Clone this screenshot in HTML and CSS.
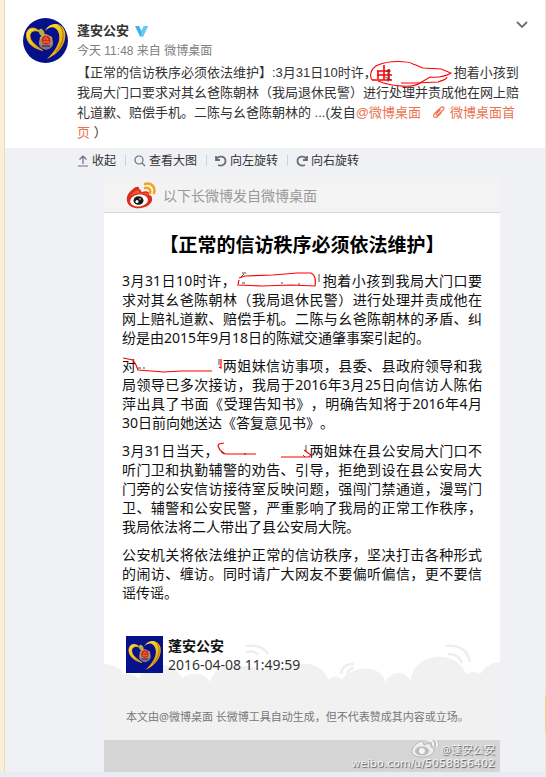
FILE: index.html
```html
<!DOCTYPE html>
<html lang="zh-CN">
<head>
<meta charset="utf-8">
<title>蓬安公安的微博</title>
<link rel="stylesheet" href="styles.css">
</head>
<body>
<svg class="defs" aria-hidden="true">
  <defs>
    <linearGradient id="gold" x1="0" y1="0" x2="1" y2="1">
      <stop offset="0" stop-color="#ffe338"/><stop offset=".55" stop-color="#f3bd16"/><stop offset="1" stop-color="#b97a08"/>
    </linearGradient>
    <linearGradient id="steel" x1="0" y1="0" x2="0" y2="1">
      <stop offset="0" stop-color="#d8b070"/><stop offset="1" stop-color="#7d6a6a"/>
    </linearGradient>
    <symbol id="emblem" viewBox="0 0 45 45">
      <path d="M17 14C11 7 3 10 3.500 18C4 25 10 30 19.500 32.500C14 28 7 24 7 18C7 13 12 11.500 17 14Z" fill="url(#gold)" stroke="#f0bd1c" stroke-width=".8"/>
      <path d="M16 15C15 10 18 10 20 12C22 14 22 17 21 19C19 19 17 17 16 15Z" fill="#b5b03a"/>
      <path d="M22 13C26 4 39 3 42 14C44 25 36 36 24 41C31 34 38 25 36 16C34 8 27 7 22 13Z" fill="url(#gold)"/>
      <path d="M36 7C42 12 42 24 33 34" fill="none" stroke="#8a6412" stroke-width=".8"/>
      <path d="M23 16L29 19L30 25C30 29 27 31 23 32C19 31 16 29 16 25L17 19Z" fill="url(#steel)"/>
      <circle cx="23" cy="22" r="4.600" fill="#cf2a1e"/>
      <path d="M21 22L23 19.500L25 22M20 24H26" fill="none" stroke="#f0a53a" stroke-width=".8"/>
      <path d="M19 28H27" stroke="#343b87" stroke-width="1.500"/>
    </symbol>
  </defs>
</svg>
<div class="page">
<article class="card">
  <header class="post">
    <svg class="avatar" role="img" aria-label="蓬安公安"><use href="#emblem"/></svg>
    <div class="post-main">
      <div class="author">
        <a class="name" href="#">蓬安公安</a>
        <svg class="verified" viewBox="0 0 13 12" aria-hidden="true"><path d="M0 1H4L6.500 6L9 1H13L8 11.500H5Z" fill="#3db3ee"/><path d="M9 1H13L8 11.500H6L6.500 6Z" fill="#68caf8"/></svg>
        <button class="more" aria-label="更多"><svg viewBox="0 0 12 8"><path d="M1 1L6 6L11 1" fill="none" stroke="#696e78" stroke-width="1.800"/></svg></button>
      </div>
      <p class="meta">今天 11:48 来自 <a href="#">微博桌面</a></p>
      <p class="text">【正常的信访秩序必须依法维护】:3月31日10时许，<span class="redact redact-post"><svg viewBox="0 0 84 28" aria-hidden="true"><g fill="none" stroke="#f00" stroke-width="1.100"><path d="M3 20C0 15 2 8 9 5C20 0 39 1 44 4C48 5 51 7 54 8L72 9L82 13C77 16 71 18 61 17L51 23C45 28 24 27 9 21"/><path d="M32 23H47L69 22C75 20 78 19 78 17"/><path d="M3 20H23M9 11V19M15 5V20M20 9V20M8 11H21M8 15H23" stroke-width="1.600"/></g><path d="M17 11H22M19 9V22M16 17L22 20" stroke="#443438" stroke-width=".8"/></svg></span>抱着小孩到<br>我局大门口要求对其幺爸陈朝林（我局退休民警）进行处理并责成他在网上赔<br>礼道歉、赔偿手机。二陈与幺爸陈朝林的 ...(发自<a href="#">@微博桌面</a><a href="#"><svg class="link-icon" viewBox="0 0 12 12" aria-hidden="true"><path d="M7.500 3.500L3.500 7.500C2.500 8.500 4 10 5 9L10 4C12.500 1.500 10 0 8 1.500L2 7C-1 10 2 13 4.500 10.500L8.500 6.500" fill="none" stroke="#eb7350" stroke-width="1.100"/></svg>微博桌面首<br>页</a> ）</p>
    </div>
  </header>
  <section class="media">
    <nav class="tools">
      <button><svg viewBox="0 0 12 12"><path d="M6 9V1M2.500 4.500L6 1L9.500 4.500M1 11H11"/></svg>收起</button>
      <button><svg viewBox="0 0 12 12"><circle cx="5" cy="5" r="4"/><path d="M8 8L11 11"/></svg>查看大图</button>
      <button><svg viewBox="0 0 12 12"><path d="M1 1V5H5M1.500 4.500C3 0 10.500 1 10.500 6C10.500 10 6.500 11.500 3 10" stroke-width="1.800"/></svg>向左旋转</button>
      <button><svg viewBox="0 0 12 12"><path d="M11 1V5H7M10.500 4.500C9 0 1.500 1 1.500 6C1.500 10 5.500 11.500 9 10" stroke-width="1.800"/></svg>向右旋转</button>
    </nav>
    <div class="long">
      <div class="long-head">
        <svg class="weibo" viewBox="0 0 30 28" aria-hidden="true">
          <path d="M13 7C14 4 10 4 7 7C3 10 0 14 1 19C2 25 9 27 15 26C22 25 27 21 26 16C26 14 24 13 23 13C24 10 21 8 16 10C15 10 16 8 13 7Z" fill="#dd2c1d"/>
          <path d="M12 8C10 8 5 12 5 14C10 10 18 10 22 14C23 11 20 10 16 12C13 13 14 9 12 8Z" fill="#f05d31"/>
          <ellipse cx="13" cy="18.500" rx="9" ry="6" fill="#fff" transform="rotate(-8 13 18.500)"/>
          <ellipse cx="12.500" cy="18.500" rx="5" ry="4.300" fill="#171717"/><circle cx="11" cy="19.500" r="1.500" fill="#fff"/><circle cx="14" cy="17" r=".8" fill="#fff"/>
          <path d="M19 6C23 5 25 8 24 11M19 2C25 0 30 5 28 11" fill="none" stroke="#f4a51b" stroke-width="2.500" stroke-linecap="round"/>
        </svg>
        <span>以下长微博发自微博桌面</span>
      </div>
      <h1>【正常的信访秩序必须依法维护】</h1>
      <div class="prose">
        <p>3月31日10时许，<span class="redact redact-a"><svg viewBox="0 0 86 18" aria-hidden="true"><path d="M3 9L2 14L26 15L55 14L79 15C80 9 79 4 75 2L61 2L37 4L9 5L3 7" fill="none" stroke="#f00" stroke-width="1.200"/><path d="M6 2H10M8 3L5 6M6 12H9M45 12H47M62 13H64M83 3V11" stroke="#222" stroke-width=".8" fill="none"/></svg></span>抱着小孩到我局大门口要求对其幺爸陈朝林（我局退休民警）进行处理并责成他在网上赔礼道歉、赔偿手机。二陈与幺爸陈朝林的矛盾、纠纷是由2015年9月18日的陈斌交通肇事案引起的。</p>
        <p>对<span class="redact redact-b"><svg viewBox="0 0 86 18" aria-hidden="true"><path d="M-13 2L-3 4L0 9L2 14L28 16L45 15H76M85 3V12L83 11" fill="none" stroke="#f00" stroke-width="1.200"/><path d="M2 12H5M8 11V13M83 3V9" stroke="#222" stroke-width=".8"/></svg></span>两姐妹信访事项，县委、县政府领导和我局领导已多次接访，我局于2016年3月25日向信访人陈佑萍出具了书面《受理告知书》，明确告知将于2016年4月30日前向她送达《答复意见书》。</p>
        <p>3月31日当天，<span class="redact redact-c"><svg viewBox="0 0 90 18" aria-hidden="true"><path d="M5 2L0 3L-1 5L1 9L6 13H37M62 16H90L92 14L85 9" fill="none" stroke="#f00" stroke-width="1.200"/><path d="M2 11L5 13M87 4V10M25 13H27M84 14L86 16" stroke="#222" stroke-width=".8"/></svg></span>两姐妹在县公安局大门口不听门卫和执勤辅警的劝告、引导，拒绝到设在县公安局大门旁的公安信访接待室反映问题，强闯门禁通道，漫骂门卫、辅警和公安民警，严重影响了我局的正常工作秩序，我局依法将二人带出了县公安局大院。</p>
        <p>公安机关将依法维护正常的信访秩序，坚决打击各种形式的闹访、缠访。同时请广大网友不要偏听偏信，更不要信谣传谣。</p>
      </div>
      <footer class="sign">
        <svg class="clouds" viewBox="0 0 396 104" preserveAspectRatio="none" aria-hidden="true">
          <path d="M0 104V28C10 28 18 34 20 39Q28 36 35 43C41 25 68 23 78 42C88 34 102 38 106 46C109 35 116 31 123 31C143 28 154 32 161 34Q168 30 173 34C184 26 207 27 211 30C220 33 223 40 224 44Q232 37 238 44C247 29 278 28 281 46C288 34 302 34 307 46C308 15 354 13 362 38Q370 34 376 38C383 28 389 27 396 26V104Z" fill="#f1f1f1"/>
          <path d="M142 10Q158 8 164 18M142 16Q151 14 154 19M237 38Q238 28 250 28M243 38Q245 32 250 32M342 10C356 8 364 15 366 26M344 18Q355 18 358 27" fill="none" stroke="#eee" stroke-width="2.500"/>
        </svg>
        <div class="signer">
          <svg class="seal" role="img" aria-label="蓬安公安"><use href="#emblem"/></svg>
          <div><strong>蓬安公安</strong><time datetime="2016-04-08T11:49:59">2016-04-08 11:49:59</time></div>
        </div>
        <p class="note">本文由@微博桌面 长微博工具自动生成，但不代表赞成其内容或立场。</p>
      </footer>
      <div class="mark">
        <svg viewBox="0 0 28 22" aria-hidden="true"><path d="M12 6C11 3 0 10 1 16C3 24 23 22 23 14C23 12 21 11 20 11C21 7 16 7 13 9Z" fill="#eee" stroke="#aaa" stroke-width=".8"/><ellipse cx="11" cy="15" rx="7" ry="4.500" fill="#bbb"/><circle cx="11" cy="15" r="3" fill="#f5f5f5"/><path d="M17 5Q23 4 22 10M17 2Q27 0 26 11" fill="none" stroke="#aaa" stroke-width="3"/><path d="M17 5Q23 4 22 10M17 2Q27 0 26 11" fill="none" stroke="#f3f3f3" stroke-width="2"/></svg>
        <span class="mark-name">@蓬安公安</span>
        <span class="mark-url">weibo.com/u/5058856402</span>
      </div>
    </div>
  </section>
</article>
</div>
</body>
</html>
```
FILE: styles.css
```css
* { box-sizing: border-box; }
body {
  margin: 0;
  background: #e6ecf2;
  color: #333;
  font: 13px/20px "Liberation Sans", "Noto Sans CJK SC", sans-serif;
  text-spacing-trim: space-all;
}
p, h1 { margin: 0; }
a { color: #eb7350; text-decoration: none; }
button { border: 0; padding: 0; background: none; color: inherit; font: inherit; cursor: pointer; }
.defs { position: absolute; width: 0; height: 0; }
.page {
  padding: 0 1px 0 5px;
  background:
    linear-gradient(90deg, #faf0d8 4px, #e6dcc4 4px, #e6dcc4 5px, transparent 5px),
    linear-gradient(#efe6d4 90%, #f5cf85 90%, #f5cf85 95%, #efe6d4 95%);
}
.card { background: #fff; }
.post { display: flex; gap: 9px; padding: 18px 17px 5px 18px; }
.avatar { flex: none; width: 45px; height: 45px; border-radius: 50%; background: #06108b; }
.post-main { flex: 1; padding-top: 3px; min-width: 0; }
.author { display: flex; align-items: center; gap: 6px; }
.name { color: #333; font-weight: bold; }
.verified { width: 13px; height: 12px; }
.more { margin-left: auto; display: flex; align-self: flex-start; }
.more svg { width: 12px; height: 8px; }
.meta { font-size: 12px; color: #808080; }
.meta a { color: #808080; }
.text { padding-top: 2px; white-space: nowrap; }
.link-icon { width: 12px; height: 12px; margin: 0 5px 0 12px; vertical-align: -1px; }
.redact { display: inline-block; position: relative; height: 18px; vertical-align: top; }
.redact svg { position: absolute; left: 0; top: 0; overflow: visible; }
.redact-post { width: 77px; }
.redact-post svg { width: 84px; height: 28px; left: -8px; top: -3px; }
.media { background: #f0f1f4; }
.tools { display: flex; gap: 18px; padding: 3px 0 6px 72px; color: #333; font-size: 12px; }
.tools button { display: flex; align-items: center; gap: 3px; position: relative; white-space: nowrap; }
.tools button + button::before { content: ""; position: absolute; left: -9px; top: 4px; height: 11px; border-left: 1px solid #d0d2d6; }
.tools svg { width: 12px; height: 12px; fill: none; stroke: #696e78; stroke-width: 1.2; }
.long {
  margin: 0 45px 0 99px;
  background: #fff;
  color: #111;
  font-family: "Noto Sans", "Noto Sans CJK SC", sans-serif;
  font-size: 14px;
  line-height: 19px;
}
.long-head { display: flex; align-items: center; gap: 7px; height: 36px; padding: 2px 22px 0; background: #f3f3f3; border-bottom: 1px solid #d5d5d5; color: #999; }
.weibo { width: 30px; height: 28px; }
h1 { padding: 20px 0 13px; text-align: center; font-size: 19px; line-height: 25px; color: #000; white-space: nowrap; }
.prose { padding: 0 18px; text-align: justify; }
.prose p + p { margin-top: 9px; }
.redact-a, .redact-b { width: 86px; }
.redact-a svg, .redact-b svg { width: 86px; height: 18px; }
.redact-c { width: 90px; }
.redact-c svg { width: 90px; height: 18px; }
.sign { position: relative; margin-top: 34px; padding: 0 22px 14px; }
.clouds { position: absolute; left: 0; top: 0; width: 100%; height: 100%; }
.signer { position: relative; display: flex; gap: 5px; align-items: center; height: 37px; }
.signer strong, .signer time { display: block; }
.signer time { color: #333; }
.seal { width: 37px; height: 37px; background: #06108b; }
.note { position: relative; padding-top: 34px; color: #777; font-size: 11px; white-space: nowrap; }
.mark { display: grid; grid-template-columns: 1fr auto; column-gap: 2px; padding: 3px 5px 1px; background: #d5d5d5; color: #f3f3f3; font-size: 11px; line-height: 14px; text-shadow: 1px 1px 1px #555; }
.mark svg { width: 28px; height: 22px; margin: -7px 0 -1px; justify-self: end; }
.mark-url { grid-column: 1 / -1; justify-self: end; font-family: "DejaVu Sans", sans-serif; }
```
